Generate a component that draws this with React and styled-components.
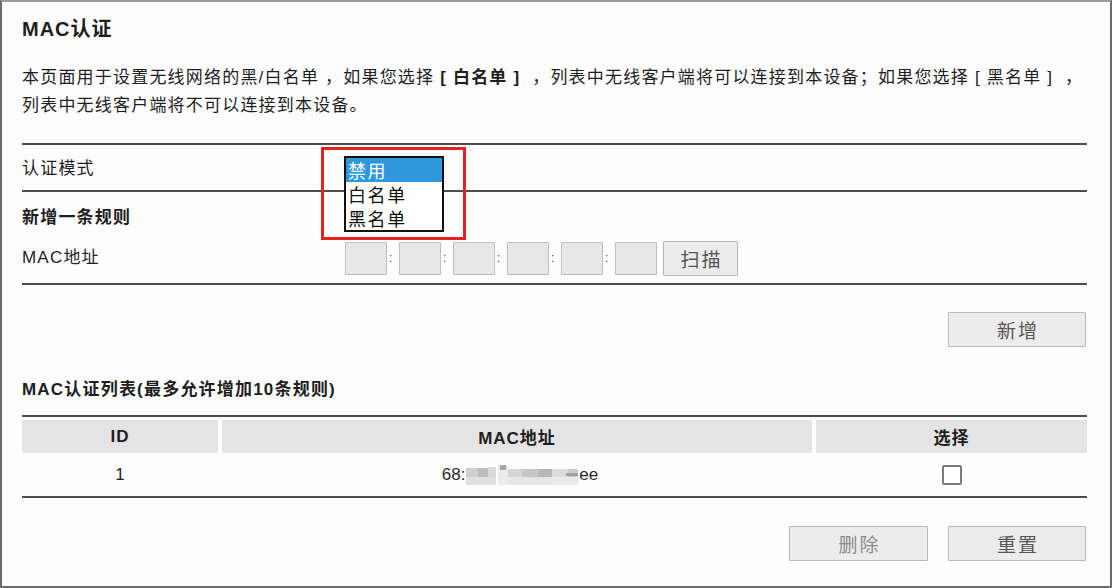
import React from "react";
import styled, { createGlobalStyle } from "styled-components";

const Global = createGlobalStyle`
  html, body { margin: 0; padding: 0; background: #ffffff; }
  body { font-family: "Liberation Sans", "Noto Sans CJK SC", sans-serif; color: #1e1e1e; }
  * { box-sizing: border-box; }
`;

const Frame = styled.div`
  width: 1112px;
  height: 588px;
  border: 2px solid #6b6b6b;
  border-top-color: #9a9a9a;
  background: #fdfdfe;
  padding: 14px 23px 0 20px;
  display: flex;
  flex-direction: column;
`;

const Title = styled.h1`
  margin: 0;
  font-size: 20px;
  line-height: 26px;
  letter-spacing: 1px;
  font-weight: bold;
`;

const Desc = styled.p`
  margin: 22px 0 0;
  font-size: 17px;
  letter-spacing: 1.2px;
  line-height: 28px;
  white-space: pre;
`;

const Rule = styled.div`
  height: 2px;
  background: #4d4d4d;
  margin-top: ${(p) => p.$mt || 0}px;
`;

const FormRow = styled.div`
  display: grid;
  grid-template-columns: 323px 1fr;
  align-items: center;
  height: ${(p) => p.$h}px;
  padding-top: ${(p) => p.$pt || 0}px;
`;

const Label = styled.div`
  font-size: 17px;
  letter-spacing: 1.2px;
  line-height: 22px;
  padding-top: ${(p) => p.$pt || 0}px;
`;

const SectionTitle = styled.div`
  font-size: 17px;
  letter-spacing: 1.2px;
  line-height: 22px;
  font-weight: bold;
  margin-top: ${(p) => p.$mt}px;
`;

const SelectCell = styled.div`
  position: relative;
  align-self: stretch;
`;

const Listbox = styled.ul`
  position: absolute;
  left: -1px;
  top: 11px;
  width: 100px;
  margin: 0;
  padding: 0;
  list-style: none;
  background: #ffffff;
  border: 2px solid #111111;
  z-index: 2;
`;

const Option = styled.li`
  height: 24px;
  line-height: 24px;
  padding-left: 2px;
  font-size: 18px;
  letter-spacing: 1.6px;
  font-family: "Noto Sans CJK SC", sans-serif;
  color: ${(p) => (p.$active ? "#ffffff" : "#111111")};
  background: ${(p) => (p.$active ? "#2f97dc" : "transparent")};
`;

const Annotation = styled.div`
  position: absolute;
  left: -24px;
  top: 2px;
  width: 145px;
  height: 93px;
  border: 3px solid #e3231f;
  z-index: 3;
  pointer-events: none;
`;

const MacInputs = styled.div`
  display: flex;
  align-items: center;
`;

const OctetBox = styled.div`
  width: 42px;
  height: 33px;
  background: #e7e7e7;
  border: 1px solid #bdbdbd;
  border-radius: 1px;
`;

const Colon = styled.span`
  width: 12px;
  padding-left: 2px;
  text-align: left;
  font-size: 12px;
  color: #444;
  line-height: 33px;
`;

const Button = styled.button`
  width: ${(p) => p.$w}px;
  height: 35px;
  background: #ececec;
  border: 1px solid #b8b8b8;
  border-radius: 1px;
  font-family: "Noto Sans CJK SC", sans-serif;
  font-size: 19px;
  letter-spacing: 2px;
  color: ${(p) => (p.$dim ? "#8a8a8a" : "#555555")};
  padding: 0 0 0 2px;
  margin-left: ${(p) => p.$ml || 0}px;
  cursor: default;
`;

const RightBar = styled.div`
  display: flex;
  justify-content: flex-end;
  gap: 20px;
  margin-top: ${(p) => p.$mt}px;
  padding-right: 1px;
`;

const Table = styled.div`
  margin-top: 3px;
  display: grid;
  grid-template-columns: 196px 590px 1fr;
  column-gap: 4px;
`;

const HeadCell = styled.div`
  height: 33px;
  background: #e4e4e4;
  font-size: 17px;
  letter-spacing: 1px;
  font-weight: bold;
  display: flex;
  align-items: center;
  justify-content: center;
`;

const Cell = styled.div`
  height: 43px;
  font-size: 17px;
  display: flex;
  align-items: center;
  justify-content: center;
  padding-top: 1px;
`;

const Checkbox = styled.div`
  width: 20px;
  height: 20px;
  border: 2px solid #7b7b7b;
  border-radius: 2px;
  background: #fff;
`;

const MacText = styled.span`
  font-size: 17px;
  color: #2a2a2a;
`;

function Mosaic() {
  const blocks = [
    [0, 3, 12, 9, "#cfcfcf"], [12, 3, 10, 9, "#bdbdbd"], [22, 2, 8, 10, "#dadada"],
    [0, 12, 30, 8, "#e0e0e0"], [32, 0, 10, 20, "#ebebeb"], [34, 0, 6, 5, "#a5a5a5"],
    [42, 4, 14, 8, "#d6d6d6"], [56, 4, 16, 8, "#c6c6c6"], [72, 4, 14, 8, "#b8b8b8"],
    [42, 12, 44, 8, "#e5e5e5"], [86, 4, 16, 8, "#dcdcdc"], [102, 4, 10, 8, "#cccccc"],
    [86, 12, 26, 8, "#eaeaea"], [100, 8, 12, 3, "#a0a0a0"],
  ];
  return (
    <svg width="112" height="20" viewBox="0 0 112 20" style={{ display: "block" }}>
      {blocks.map(([x, y, w, h, c], i) => (
        <rect key={i} x={x} y={y} width={w} height={h} fill={c} />
      ))}
    </svg>
  );
}

const MacValue = styled.div`
  display: flex;
  align-items: center;
  gap: 1px;
  margin-left: 6px;
`;

export default function App() {
  return (
    <>
      <Global />
      <Frame>
        <Title>MAC认证</Title>
        <Desc>
          {"本页面用于设置无线网络的黑/白名单 ，如果您选择 "}
          <b>[ 白名单 ]</b>
          {"  ，列表中无线客户端将可以连接到本设备；如果您选择 [ 黑名单 ]  ，"}
          <br />
          列表中无线客户端将不可以连接到本设备。
        </Desc>
        <Rule $mt={23} />
        <FormRow $h={45}>
          <Label $pt={2}>认证模式</Label>
          <SelectCell>
            <Listbox>
              <Option $active>禁用</Option>
              <Option>白名单</Option>
              <Option>黑名单</Option>
            </Listbox>
            <Annotation />
          </SelectCell>
        </FormRow>
        <Rule />
        <SectionTitle $mt={15}>新增一条规则</SectionTitle>
        <FormRow $h={54} $pt={4}>
          <Label>MAC地址</Label>
          <MacInputs>
            <OctetBox /><Colon>:</Colon>
            <OctetBox /><Colon>:</Colon>
            <OctetBox /><Colon>:</Colon>
            <OctetBox /><Colon>:</Colon>
            <OctetBox /><Colon>:</Colon>
            <OctetBox />
            <Button $w={75} $ml={6}>扫描</Button>
          </MacInputs>
        </FormRow>
        <Rule />
        <RightBar $mt={27}>
          <Button $w={138}>新增</Button>
        </RightBar>
        <SectionTitle $mt={32}>MAC认证列表(最多允许增加10条规则)</SectionTitle>
        <Rule $mt={14} />
        <Table>
          <HeadCell>ID</HeadCell>
          <HeadCell>MAC地址</HeadCell>
          <HeadCell>选择</HeadCell>
          <Cell>1</Cell>
          <Cell>
            <MacValue>
              <MacText>68:</MacText>
              <Mosaic />
              <MacText>ee</MacText>
            </MacValue>
          </Cell>
          <Cell>
            <Checkbox />
          </Cell>
        </Table>
        <Rule />
        <RightBar $mt={28}>
          <Button $w={139} $dim>删除</Button>
          <Button $w={138}>重置</Button>
        </RightBar>
      </Frame>
    </>
  );
}
